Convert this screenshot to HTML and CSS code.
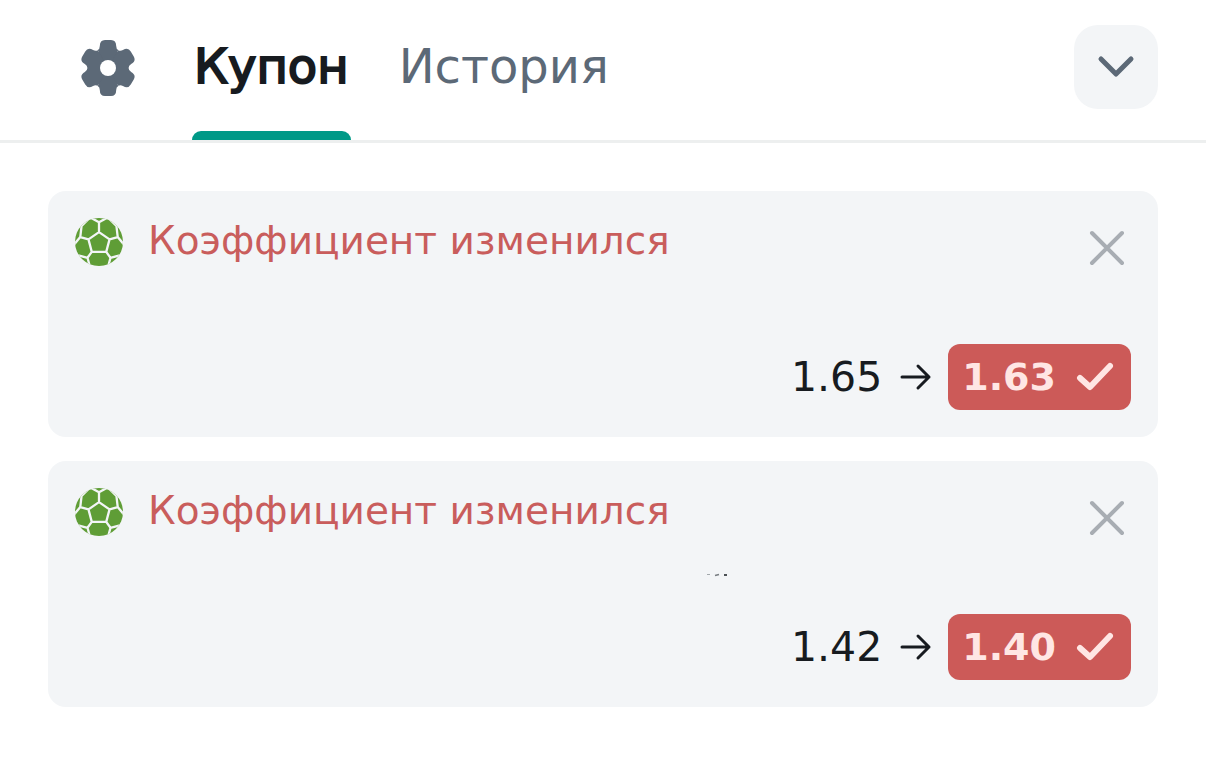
FILE: index.html
```html
<!DOCTYPE html>
<html lang="ru">
<head>
<meta charset="utf-8">
<meta name="viewport" content="width=device-width, initial-scale=1">
<title>Купон</title>
<link rel="stylesheet" href="styles.css">
</head>
<body>
<svg class="sprite" aria-hidden="true">
  <defs>
    <path id="tooth" d="M0 0L-10.3 -17.9Q-8.2 -19 -8.2 -22Q-8.2 -28 -3 -28H3Q8.2 -28 8.2 -22Q8.2 -19 10.3 -17.9Z"/>
    <clipPath id="ball-clip"><circle cx="73" cy="73" r="73"/></clipPath>
    <symbol id="ball" viewBox="0 0 146 146">
      <g clip-path="url(#ball-clip)">
        <rect width="146" height="146" fill="#5f9d36"/>
        <path fill="none" stroke="#f3f5f7" stroke-width="7" stroke-linejoin="round" d="M73 43L105 65L95 103H51L41 65ZM73 43V13M105 65L130 58M95 103L108 121M51 103L38 121M41 65L16 58M73 13L48 -1M73 13L98 -1M46 -2L20 24L16 58L-4 82M100 -2L126 24L130 58L150 82M38 121L4 112M38 121L46 150M108 121L142 112M108 121L100 150"/>
      </g>
    </symbol>
    <symbol id="close" viewBox="0 0 36 36"><path d="M3 3L33 33M33 3L3 33" fill="none" stroke="#a8adb3" stroke-width="4" stroke-linecap="round"/></symbol>
    <symbol id="arrow" viewBox="0 0 32 28"><path d="M2 14H29M18 3L29 14L18 25" fill="none" stroke="#171b20" stroke-width="3" stroke-linecap="round" stroke-linejoin="round"/></symbol>
    <symbol id="check" viewBox="0 0 38 30"><path d="M4 16L14 25L34 4" fill="none" stroke="#ffe6e4" stroke-width="6" stroke-linecap="round" stroke-linejoin="round"/></symbol>
  </defs>
</svg>

<header class="header">
  <button class="settings" type="button" aria-label="Настройки">
    <svg width="56" height="56" viewBox="-28 -28 56 56" fill="#5c6977">
      <circle r="19"/>
      <use href="#tooth"/><use href="#tooth" transform="rotate(60)"/><use href="#tooth" transform="rotate(120)"/>
      <use href="#tooth" transform="rotate(180)"/><use href="#tooth" transform="rotate(240)"/><use href="#tooth" transform="rotate(300)"/>
      <circle r="8" fill="#fff"/>
    </svg>
  </button>
  <nav class="tabs">
    <a class="tab tab-active" href="#coupon" aria-current="page"><span class="tab-label">Купон</span></a>
    <a class="tab" href="#history"><span class="tab-label">История</span></a>
  </nav>
  <button class="collapse" type="button" aria-label="Свернуть">
    <svg width="38" height="24" viewBox="0 0 38 24"><path d="M4 4L19 19L34 4" fill="none" stroke="#5c6977" stroke-width="5" stroke-linecap="round" stroke-linejoin="round"/></svg>
  </button>
</header>

<main class="bets" id="coupon">
  <article class="bet">
    <div class="bet-head">
      <svg class="ball" aria-hidden="true"><use href="#ball"/></svg>
      <h2 class="notice">Коэффициент изменился</h2>
      <button class="close" type="button" aria-label="Удалить"><svg width="36" height="36"><use href="#close"/></svg></button>
    </div>
    <div class="bet-info"></div>
    <div class="odds">
      <span class="odds-old">1.65</span>
      <svg width="32" height="28" aria-hidden="true"><use href="#arrow"/></svg>
      <button class="odds-new" type="button">1.63 <svg width="38" height="30" aria-hidden="true"><use href="#check"/></svg></button>
    </div>
  </article>
  <article class="bet">
    <div class="bet-head">
      <svg class="ball" aria-hidden="true"><use href="#ball"/></svg>
      <h2 class="notice">Коэффициент изменился</h2>
      <button class="close" type="button" aria-label="Удалить"><svg width="36" height="36"><use href="#close"/></svg></button>
    </div>
    <div class="bet-info">
      <svg class="marks" width="22" height="4" viewBox="0 0 22 4" aria-hidden="true"><path d="M0 1.5H3" stroke="#a3a8ac"/><path d="M8 2.5L12 1.5" stroke="#777c80" stroke-width="1.5"/><path d="M17 2H20" stroke="#4c5155" stroke-width="2"/></svg>
    </div>
    <div class="odds">
      <span class="odds-old">1.42</span>
      <svg width="32" height="28" aria-hidden="true"><use href="#arrow"/></svg>
      <button class="odds-new" type="button">1.40 <svg width="38" height="30" aria-hidden="true"><use href="#check"/></svg></button>
    </div>
  </article>
</main>
</body>
</html>
```
FILE: styles.css
```css
* {
  box-sizing: border-box;
}

body {
  margin: 0;
  background: #fff;
  color: #171b20;
  font-family: "DejaVu Sans", sans-serif;
}

button {
  padding: 0;
  border: 0;
  background: none;
  font: inherit;
  cursor: pointer;
}

svg {
  display: block;
  flex: none;
}

.sprite {
  position: absolute;
  width: 0;
  height: 0;
}

.header {
  display: flex;
  align-items: stretch;
  padding: 0 48px 0 80px;
  border-bottom: 3px solid #edefef;
}

.settings {
  align-self: flex-start;
  margin-top: 40px;
}

.tabs {
  display: flex;
  gap: 46px;
  margin-left: 56px;
}

.tab {
  display: flex;
  flex-direction: column;
  padding-top: 36px;
  color: #5c6977;
  font-size: 48px;
  line-height: 60px;
  text-decoration: none;
}

.tab-label {
  padding: 0 2px;
}

.tab::after {
  content: "";
  height: 9px;
  margin-top: 35px;
  border-radius: 9px 9px 0 0;
}

.tab-active {
  color: #171b20;
  -webkit-text-stroke: 2px #171b20;
}

.tab-active::after {
  background: #009987;
}

.collapse {
  display: grid;
  place-items: center;
  width: 84px;
  height: 84px;
  margin: 25px 0 0 auto;
  border-radius: 24px;
  background: #f3f5f7;
}

.bets {
  display: grid;
  gap: 24px;
  padding: 48px;
}

.bet {
  display: flex;
  flex-direction: column;
  padding: 27px 27px 27px 26px;
  border-radius: 18px;
  background: #f3f5f7;
}

.bet-head {
  display: flex;
  align-items: flex-start;
}

.ball {
  width: 50px;
  height: 48px;
}

.notice {
  margin: 0 auto 0 24px;
  color: #c95d5c;
  font-size: 39px;
  font-weight: 400;
  line-height: 46px;
}

.close {
  margin: 12px 6px 0 0;
}

.bet-info {
  display: grid;
  justify-content: center;
  align-items: center;
  height: 78px;
}

.marks {
  margin-left: 230px;
}

.odds {
  display: flex;
  align-items: center;
  justify-content: flex-end;
}

.odds-old {
  margin-right: 18px;
  font-size: 41px;
}

.odds-new {
  display: flex;
  align-items: center;
  gap: 20px;
  height: 66px;
  margin-left: 16px;
  padding: 0 17px 0 14px;
  border-radius: 12px;
  background: #cc5a58;
  color: #ffe6e4;
  font-size: 38px;
  font-weight: 700;
}
```
